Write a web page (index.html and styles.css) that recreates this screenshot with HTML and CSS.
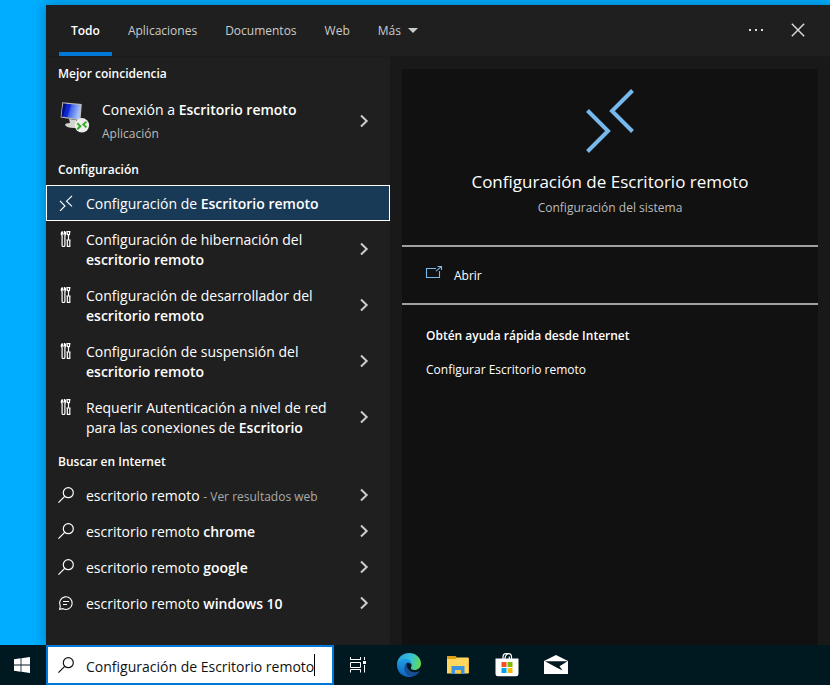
FILE: index.html
```html
<!DOCTYPE html>
<html lang="es">
<head>
    <meta charset="UTF-8">
    <meta name="viewport" content="width=device-width, initial-scale=1.0">
    <title>Buscar</title>
    <link rel="stylesheet" href="styles.css">
</head>
<body>
    <!-- Shared icons -->
    <svg class="sprite" aria-hidden="true">
        <symbol id="chevron" viewBox="0 0 16 16"><path d="M5 2.5 L10.7 8 L5 13.5" fill="none" stroke="currentColor" stroke-width="2"/></symbol>
        <symbol id="search" viewBox="0 0 16 16"><circle cx="10.3" cy="5.7" r="5" fill="none" stroke="currentColor" stroke-width="1.2"/><path d="M6.7 9.3 L.4 15.6" stroke="currentColor" stroke-width="1.2"/></symbol>
        <symbol id="tools" viewBox="0 0 16 16"><path d="M4.5 .5 V3 H6.5 V.5 C8 1.2 8.1 3.4 6.9 4.6 V14.2 Q6.9 15.5 5.5 15.5 T4.1 14.2 V4.6 C2.9 3.4 3 1.2 4.5 .5 M9 .6 H11.8 L11.4 3.6 H9.5 Z M10.5 3.6 V9 M8.5 9 H12.6 M9.3 9 V15.4 H11.8 V9" fill="none" stroke="currentColor" stroke-width="1.2"/></symbol>
        <symbol id="remote" viewBox="0 0 16 16"><path d="M2 6 L7 11 L2 16 M14 1 L8.5 6.2 L14 11.3" fill="none" stroke="currentColor" stroke-width="1.1"/></symbol>
        <symbol id="chat" viewBox="0 0 16 16"><path d="M1.6 14.4 L2.3 11 A6.3 6.3 0 1 1 5 13.7 L1.6 14.4 Z M5 6.5 H11 M5 9.5 H9" fill="none" stroke="currentColor" stroke-width="1.1"/></symbol>
    </svg>

    <main class="desktop">
        <div class="search-panel">
            <header class="header">
                <nav class="tabs">
                    <button class="tab active">Todo</button>
                    <button class="tab">Aplicaciones</button>
                    <button class="tab">Documentos</button>
                    <button class="tab">Web</button>
                    <button class="tab">Más <svg class="caret" viewBox="0 0 10 5"><path d="M0 0 H10 L5 5 Z" fill="currentColor"/></svg></button>
                </nav>
                <div class="window-actions">
                    <button class="icon-button" aria-label="Opciones"><svg viewBox="0 0 16 16"><path d="M1 7 h2 v2 h-2 z M7 7 h2 v2 h-2 z M13 7 h2 v2 h-2 z" fill="currentColor"/></svg></button>
                    <button class="icon-button" aria-label="Cerrar"><svg viewBox="0 0 16 16"><path d="M1.8 1.8 L14.2 14.2 M14.2 1.8 L1.8 14.2" stroke="currentColor" stroke-width="1.4"/></svg></button>
                </div>
            </header>

            <div class="content">
                <section class="results">
                    <h2>Mejor coincidencia</h2>
                    <button class="result best">
                        <svg class="app-icon" viewBox="0 4 32 32">
                            <defs>
                                <linearGradient id="screen" x1="0" y1="0" x2="1" y2=".25">
                                    <stop offset="0" stop-color="#0616a0"/>
                                    <stop offset=".45" stop-color="#0f2bd8"/>
                                    <stop offset=".55" stop-color="#4368e8"/>
                                    <stop offset="1" stop-color="#a9c2fa"/>
                                </linearGradient>
                            </defs>
                            <path d="M11 18 L18 19 L18 23 L22 25 L18 27 Q9 27.5 7 24 Q7 22 12 22 Z" fill="#d3d3d0"/>
                            <path d="M4.3 1.3 L23.8 3 L22.5 19.5 L2.6 16.6 Z" fill="#bdbbb3"/>
                            <path d="M5.2 2.5 L22.6 4 L21.4 18.2 L3.6 15.6 Z" fill="url(#screen)"/>
                            <path d="M5.2 2.5 L8.5 3 L4.9 15.8 L3.6 15.6 Z" fill="#04107c"/>
                            <circle cx="23.9" cy="24.3" r="7.2" fill="#ededed"/>
                            <path d="M19.3 22.3 L22.4 25.2 L19.3 28.2 M28.4 20.6 L25.3 23.5 L28.4 26.4" fill="none" stroke="#30ad22" stroke-width="1.9"/>
                        </svg>
                        <span class="label">Conexión a <b>Escritorio remoto</b><small>Aplicación</small></span>
                        <svg class="chevron"><use href="#chevron"/></svg>
                    </button>

                    <h2>Configuración</h2>
                    <button class="result selected">
                        <svg class="icon"><use href="#remote"/></svg>
                        <span class="label">Configuración de <b>Escritorio remoto</b></span>
                    </button>
                    <button class="result tall">
                        <svg class="icon"><use href="#tools"/></svg>
                        <span class="label">Configuración de hibernación del <br><b>escritorio remoto</b></span>
                        <svg class="chevron"><use href="#chevron"/></svg>
                    </button>
                    <button class="result tall">
                        <svg class="icon"><use href="#tools"/></svg>
                        <span class="label">Configuración de desarrollador del <br><b>escritorio remoto</b></span>
                        <svg class="chevron"><use href="#chevron"/></svg>
                    </button>
                    <button class="result tall">
                        <svg class="icon"><use href="#tools"/></svg>
                        <span class="label">Configuración de suspensión del <br><b>escritorio remoto</b></span>
                        <svg class="chevron"><use href="#chevron"/></svg>
                    </button>
                    <button class="result tall">
                        <svg class="icon"><use href="#tools"/></svg>
                        <span class="label">Requerir Autenticación a nivel de red <br>para las conexiones de <b>Escritorio</b></span>
                        <svg class="chevron"><use href="#chevron"/></svg>
                    </button>

                    <h2>Buscar en Internet</h2>
                    <button class="result">
                        <svg class="icon"><use href="#search"/></svg>
                        <span class="label">escritorio remoto <span class="hint">- Ver resultados web</span></span>
                        <svg class="chevron"><use href="#chevron"/></svg>
                    </button>
                    <button class="result">
                        <svg class="icon"><use href="#search"/></svg>
                        <span class="label">escritorio remoto <b>chrome</b></span>
                        <svg class="chevron"><use href="#chevron"/></svg>
                    </button>
                    <button class="result">
                        <svg class="icon"><use href="#search"/></svg>
                        <span class="label">escritorio remoto <b>google</b></span>
                        <svg class="chevron"><use href="#chevron"/></svg>
                    </button>
                    <button class="result">
                        <svg class="icon"><use href="#chat"/></svg>
                        <span class="label">escritorio remoto <b>windows 10</b></span>
                        <svg class="chevron"><use href="#chevron"/></svg>
                    </button>
                </section>

                <section class="preview">
                    <div class="card">
                        <div class="card-head">
                            <svg class="hero" viewBox="0 0 64 64"><path d="M9.5 21.5 L30 42 L9.5 62.5 M54.5 1.5 L34 22 L54.5 42.5" fill="none" stroke="#76b9ed" stroke-width="4"/></svg>
                            <h1>Configuración de Escritorio remoto</h1>
                            <p>Configuración del sistema</p>
                        </div>
                        <button class="open">
                            <svg class="icon" viewBox="0 3 16 16"><path d="M10 3.5 H.5 V12.5 H13.5 V6 M10 6.2 L15 1.8 M11.5 1.5 H15.5 V5" fill="none" stroke="#76b9ed" stroke-width="1.1"/></svg>
                            Abrir
                        </button>
                        <div class="help">
                            <h3>Obtén ayuda rápida desde Internet</h3>
                            <a href="#">Configurar Escritorio remoto</a>
                        </div>
                    </div>
                </section>
            </div>
        </div>
    </main>

    <footer class="taskbar">
        <button class="start" aria-label="Inicio">
            <svg viewBox="0 0 16 16"><path d="M0 2.3 L6.6 1.3 V7.5 H0 Z M7.4 1.2 L16 0 V7.5 H7.4 Z M0 8.5 H6.6 V14.7 L0 13.7 Z M7.4 8.5 H16 V16 L7.4 14.8 Z" fill="#fff"/></svg>
        </button>
        <label class="search-box">
            <svg class="icon" aria-label="Buscar"><use href="#search"/></svg>
            <input type="text" value="Configuración de Escritorio remoto">
        </label>
        <div class="apps">
            <button class="task-view" aria-label="Vista de tareas">
                <svg viewBox="0 0 16 16"><path d="M.5 0 V3 M.5 2.5 H10.5 M10.5 0 V3 M.5 5.5 H10.5 V10.5 H.5 Z M.5 15.5 V12.5 H10.5 V15.5 M14.5 0 V3 M14.5 8 V15.5" fill="none" stroke="#fff"/><path d="M13 4 h3 v3 h-3 z" fill="#fff"/></svg>
            </button>
            <button aria-label="Edge">
                <svg viewBox="0 0 24 24">
                    <defs>
                        <linearGradient id="edgeTop" x1="0" y1=".3" x2="1" y2=".5">
                            <stop offset="0" stop-color="#2a9fe2"/>
                            <stop offset=".55" stop-color="#35c3d6"/>
                            <stop offset="1" stop-color="#65da55"/>
                        </linearGradient>
                        <linearGradient id="edgeLeft" x1="0" y1="0" x2="0" y2="1">
                            <stop offset="0" stop-color="#1ea0e5"/>
                            <stop offset="1" stop-color="#0d62bd"/>
                        </linearGradient>
                    </defs>
                    <path d="M0 12 C0 5 5 0 12 0 C19 0 24 5 24 10.5 C24 14.5 21.2 17 17.5 17 C15 17 13.5 16 13.9 14.8 C15.5 12.8 14.5 8 9.5 7.3 C5 6.8 1 9 0 12 Z" fill="url(#edgeTop)"/>
                    <path d="M0 12 C1 7.5 5 5.5 8.8 5.8 C13 6.1 15 9.5 14.5 12 C14 10.5 12 9.4 10 10 C6 13 8.5 21.5 15.5 23.4 C8 25.8 0 20.5 0 12 Z" fill="url(#edgeLeft)"/>
                    <path d="M10 10 C8.5 14.5 13 19.8 18.5 19.3 C20.5 19.1 22 18 22.7 17.8 C21.3 21 18.5 23 15.5 23.6 C9.5 23.8 4 15 10 10 Z" fill="#174f93"/>
                </svg>
            </button>
            <button aria-label="Explorador de archivos">
                <svg viewBox="0 0 24 24">
                    <path d="M1 3 H9.5 L11.5 5 H23 V20 H1 Z" fill="#dfa01b"/>
                    <path d="M1 6 H9.5 L11.5 4.5 H22.5 V20.5 H1 Z" fill="#ffd75e"/>
                    <path d="M5.5 13 H18.5 V21 H15 V17 H9 V21 H5.5 Z" fill="#3a94df"/>
                    <path d="M9 17 H15 V20.5 H9 Z" fill="#f6c84e"/>
                </svg>
            </button>
            <button aria-label="Microsoft Store">
                <svg viewBox="0 0 24 24">
                    <path d="M8 6 V4 Q8 .7 11 .7 H13.5 Q16.5 .7 16.5 4 V6 M10 6 Q10 2 13 1 M14.3 6 V3.5" fill="none" stroke="#fff" stroke-width="1.2"/>
                    <path d="M.5 5.5 H23.5 V21 Q23.5 23.3 21 23.3 H3 Q.5 23.3 .5 21 Z" fill="#fff"/>
                    <path d="M6.5 9 h5 v5 h-5 z" fill="#f25022"/><path d="M12.5 9 h5 v5 h-5 z" fill="#7fba00"/>
                    <path d="M6.5 15 h5 v5 h-5 z" fill="#00a4ef"/><path d="M12.5 15 h5 v5 h-5 z" fill="#ffb900"/>
                </svg>
            </button>
            <button aria-label="Correo">
                <svg viewBox="0 0 24 24"><path d="M0 8 L12 2 L24 8 V21 H0 Z" fill="#fff"/><path d="M1 8.3 H23.5 L15.5 13.3 L18.5 17.5 L12.5 14.5 Z" fill="#001820"/></svg>
            </button>
        </div>
    </footer>
</body>
</html>
```
FILE: styles.css
```css
* {
    margin: 0;
    padding: 0;
    box-sizing: border-box;
}

body {
    font-family: 'Open Sans', 'Noto Sans', sans-serif;
    font-size: 12px;
    line-height: 20px;
    color: #fff;
    background: #00adff;
    min-height: 100vh;
    display: flex;
    flex-direction: column;
}

button,
input {
    font: inherit;
    color: inherit;
    background: none;
    border: none;
    outline: none;
}

button {
    cursor: pointer;
}

svg {
    display: block;
    flex: none;
    overflow: visible;
}

.sprite {
    position: absolute;
    width: 0;
    height: 0;
}

b {
    font-weight: 600;
}

.desktop {
    flex: 1;
    display: flex;
    padding: 5px 0 0 46px;
}

.search-panel {
    flex: 1;
    display: flex;
    flex-direction: column;
    background: #1f1f1f;
    box-shadow: 0 0 12px rgba(0, 40, 70, 0.4);
}

.header {
    height: 52px;
    display: flex;
    justify-content: space-between;
    padding: 0 11px 0 13px;
    border-bottom: 1px solid #1b1b1b;
}

.tabs {
    display: flex;
    gap: 4px;
}

.tab {
    display: flex;
    align-items: center;
    gap: 7px;
    padding: 4px 12px 0;
    border-bottom: 4px solid transparent;
    color: #ccc;
}

.tab.active {
    color: #fff;
    font-weight: 600;
    border-color: #0078d7;
}

.caret {
    width: 10px;
    height: 5px;
}

.window-actions {
    display: flex;
    padding-bottom: 1px;
}

.icon-button {
    width: 42px;
    display: flex;
    align-items: center;
    justify-content: center;
    color: #ddd;
}

.icon-button svg,
.icon,
.chevron {
    width: 16px;
    height: 16px;
}

.content {
    flex: 1;
    display: flex;
}

.results {
    width: 344px;
}

.results h2 {
    padding: 7px 12px 5px;
    font-size: 12px;
    font-weight: 600;
}

.result {
    width: 100%;
    min-height: 36px;
    display: flex;
    align-items: center;
    gap: 12px;
    padding: 0 18px 0 12px;
    font-size: 14px;
    text-align: left;
}

.result:hover {
    background: #333;
}

.result .label {
    flex: 1;
    padding-top: 2px;
    white-space: nowrap;
}

.result .chevron {
    color: #ccc;
}

.result.best {
    min-height: 64px;
}

.app-icon {
    width: 32px;
    height: 32px;
}

.result small {
    display: block;
    margin-top: 4px;
    font-size: 12px;
    color: #bbb;
}

.result.selected {
    background: #193a57;
    outline: 1px solid #fff;
    outline-offset: -1px;
}

.result.tall {
    min-height: 56px;
}

.result.tall .icon {
    align-self: flex-start;
    margin-top: 10px;
}

.hint {
    font-size: 12px;
    color: #aaa;
}

.preview {
    flex: 1;
    display: flex;
    padding: 12px 12px 0;
    background: #191919;
}

.card {
    flex: 1;
    background: #111;
}

.card-head {
    display: flex;
    flex-direction: column;
    align-items: center;
    padding: 20px 12px 27px;
    border-bottom: 2px solid #a0a0a0;
}

.hero {
    width: 64px;
    height: 64px;
}

.card h1 {
    margin-top: 16px;
    font-size: 17px;
    line-height: 26px;
    font-weight: 400;
}

.card p {
    margin-top: 3px;
    color: #bbb;
}

.open {
    width: 100%;
    height: 58px;
    display: flex;
    align-items: center;
    gap: 12px;
    padding: 2px 24px 0;
    border-bottom: 2px solid #a0a0a0;
}

.help {
    padding: 21px 24px;
}

.help h3 {
    margin-bottom: 14px;
    font-size: 12px;
    font-weight: 600;
}

.help a {
    color: #fff;
    text-decoration: none;
}

.taskbar {
    height: 40px;
    display: flex;
    background: #001820;
}

.taskbar button {
    width: 48px;
    display: flex;
    align-items: center;
    justify-content: center;
}

.taskbar .start {
    width: 46px;
    padding-right: 2px;
}

.start svg,
.task-view svg {
    width: 16px;
    height: 16px;
}

.search-box {
    width: 288px;
    display: flex;
    align-items: center;
    gap: 12px;
    padding: 0 10px;
    color: #111;
    font-size: 14px;
    background: #fff;
    border: 2px solid #0078d7;
}

.search-box input {
    field-sizing: content;
    height: 22px;
    padding-top: 2px;
    border-right: 1px solid #000;
}

.apps {
    display: flex;
    gap: 1px;
}

.apps svg {
    width: 24px;
    height: 24px;
}

.apps .task-view {
    margin-right: 2px;
}

.apps .task-view svg {
    width: 16px;
    height: 16px;
}
```
